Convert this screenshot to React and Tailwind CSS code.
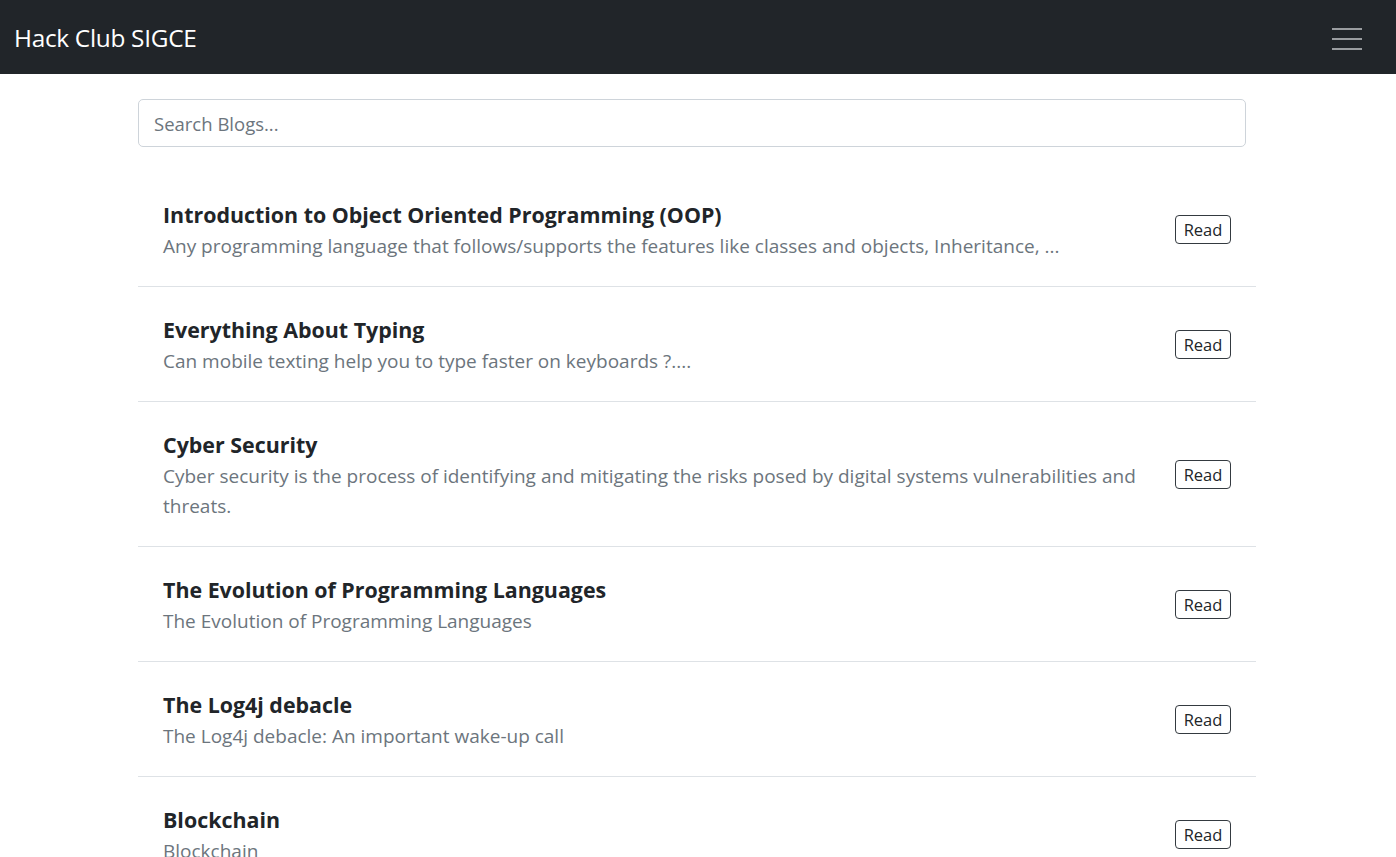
import React from 'react';

const blogs = [
    {
        title: 'Introduction to Object Oriented Programming (OOP)',
        desc: 'Any programming language that follows/supports the features like classes and objects, Inheritance, ...',
    },
    {
        title: 'Everything About Typing',
        desc: 'Can mobile texting help you to type faster on keyboards ?....',
    },
    {
        title: 'Cyber Security',
        desc: 'Cyber security is the process of identifying and mitigating the risks posed by digital systems vulnerabilities and threats.',
    },
    {
        title: 'The Evolution of Programming Languages',
        desc: 'The Evolution of Programming Languages',
    },
    {
        title: 'The Log4j debacle',
        desc: 'The Log4j debacle: An important wake-up call',
    },
    {
        title: 'Blockchain',
        desc: 'Blockchain',
    },
];

const BlogRow = ({ blog, last }) => (
    <div className={`flex items-center gap-5 px-[25px] pt-[26px] pb-[25px] ${last ? '' : 'border-b border-[#dee2e6]'}`}>
        <div className="flex-1 min-w-0">
            <h5 className="text-[21.4px] leading-[33px] font-bold text-[#212529]">{blog.title}</h5>
            <p className="text-[19px] leading-[30px] text-[#6c757d]">{blog.desc}</p>
        </div>
        <button className="shrink-0 w-[56px] h-[29px] pt-[1px] border border-[#343a40] rounded-[4px] text-[16.5px] leading-none text-[#212529] bg-white">
            Read
        </button>
    </div>
);

export default function App() {
    return (
        <div className="min-h-screen bg-white" style={{ fontFamily: '"Open Sans", "Noto Sans", sans-serif' }}>
            {/* Navbar */}
            <nav className="h-[74px] bg-[#212529] flex items-center justify-between pl-[14px] pr-[34px]">
                <span className="text-white text-[24.4px] tracking-[-0.3px] mt-[2px]">Hack Club SIGCE</span>
                <button className="flex flex-col gap-[8px] w-[30px] mt-[4px]">
                    <span className="block h-[2px] bg-[#9a9da0]" />
                    <span className="block h-[2px] bg-[#9a9da0]" />
                    <span className="block h-[2px] bg-[#9a9da0]" />
                </button>
            </nav>

            {/* Body */}
            <div className="w-[1118px] ml-[138px] pt-[25px]">
                <input
                    type="text"
                    placeholder="Search Blogs..."
                    className="w-[1108px] h-[48px] px-[15px] border border-[#ced4da] rounded-[5px] text-[18.5px] text-[#212529] placeholder-[#6c757d] outline-none"
                />
                <div className="mt-[25px]">
                    {blogs.map((blog, i) => (
                        <BlogRow key={i} blog={blog} last={i === blogs.length - 1} />
                    ))}
                </div>
            </div>
        </div>
    );
}
